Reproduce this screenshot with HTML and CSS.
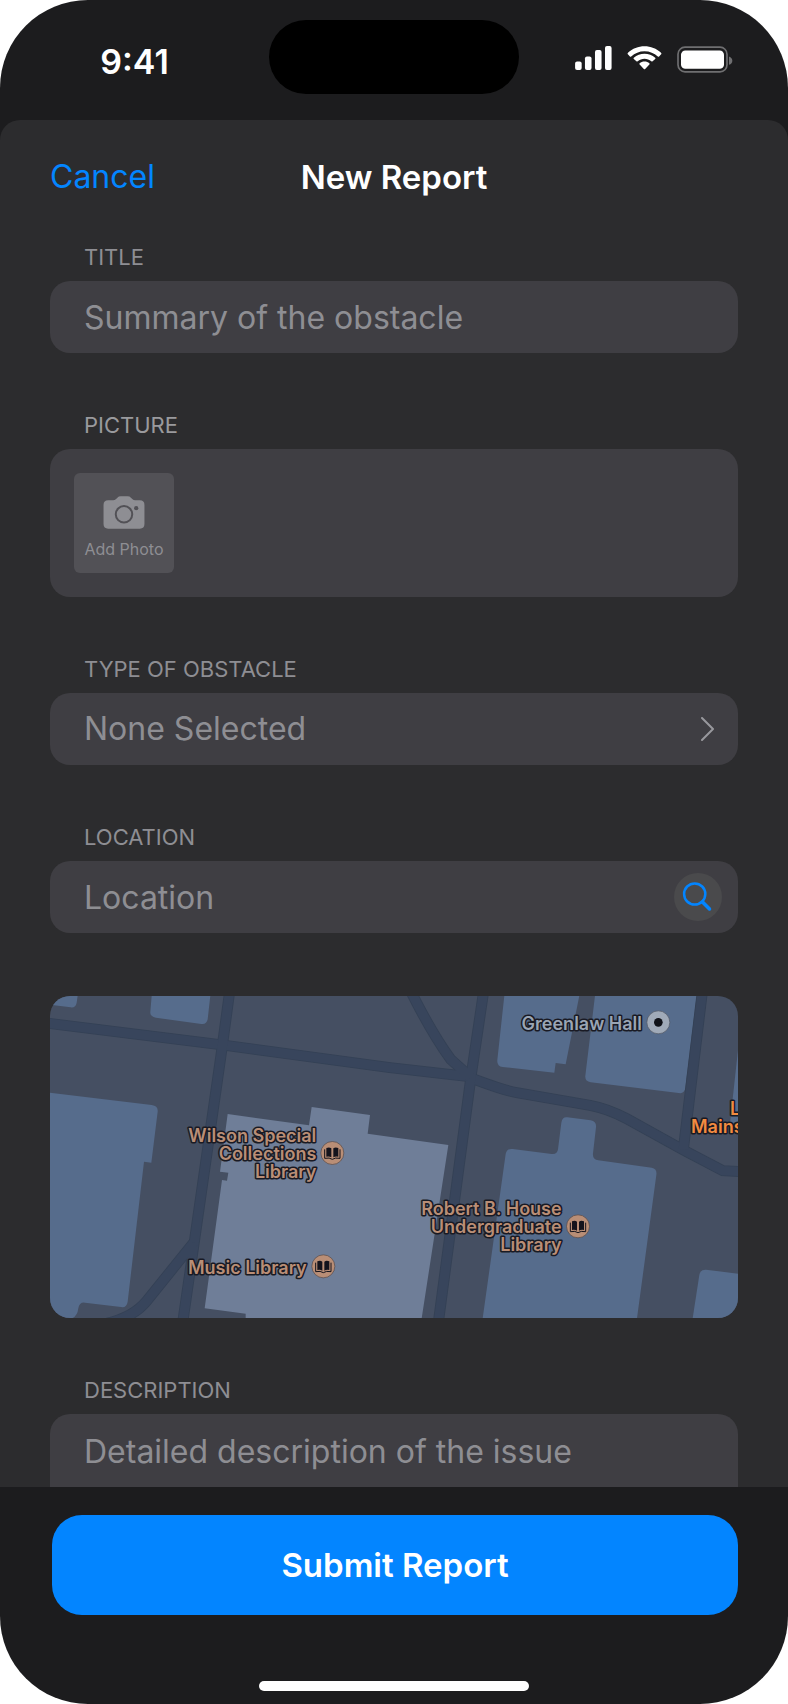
FILE: index.html
```html
<!DOCTYPE html>
<html lang="en">
<head>
<meta charset="utf-8">
<meta name="viewport" content="width=device-width, initial-scale=1">
<title>New Report</title>
<link rel="stylesheet" href="styles.css">
</head>
<body>
<div class="phone">
  <div class="status">
    <div class="status-time">9:41</div>
    <div class="island"></div>
    <div class="status-icons">
      <svg class="icon-signal" viewBox="560 138 112 73" aria-hidden="true">
        <rect x="560" y="185" width="20" height="26" rx="6"/>
        <rect x="590" y="170" width="20" height="41" rx="6"/>
        <rect x="620.500" y="150" width="20" height="61" rx="6"/>
        <rect x="651" y="138" width="20" height="73" rx="6"/>
      </svg>
      <svg class="icon-wifi" viewBox="716 137 106 74" aria-hidden="true">
        <path d="M769 153C785 153 799 159 810 169Q812 171 814 169L821 162Q822 160 820 158C806 145 788 138 769 138S732 145 718 158Q716 160 717 162L724 169Q726 171 728 169C739 159 753 153 769 153Z"/>
        <path d="M769 176C777 176 784 179 790 184Q792 186 794 184L802 177Q804 175 802 173C793 165 781 161 769 161S745 165 736 173Q734 175 736 177L744 184Q746 186 748 184C754 179 761 176 769 176Z"/>
        <path d="M784 194Q786 192 784 190C780 187 775 185 769 185S758 187 754 190Q752 192 754 194L767 208Q769 210 771 208Z"/>
      </svg>
      <svg class="icon-battery" viewBox="867 137 168 80" aria-hidden="true">
        <rect class="battery-shell" x="870" y="140" width="147" height="74" rx="21"/>
        <path class="battery-cap" d="M1023 168Q1033 172 1033 181T1023 193Z"/>
        <rect x="879" y="150" width="129" height="55" rx="13"/>
      </svg>
    </div>
  </div>

  <form class="sheet">
    <header class="nav">
      <button class="nav-cancel" type="button">Cancel</button>
      <h1 class="nav-title">New Report</h1>
    </header>

    <div class="sections">
      <div class="section">
        <label class="caption" for="title">TITLE</label>
        <div class="field">
          <input class="field-input" id="title" type="text" placeholder="Summary of the obstacle">
        </div>
      </div>

      <div class="section">
        <h2 class="caption caption-strong">PICTURE</h2>
        <div class="photos">
          <button class="add-photo" type="button">
            <svg class="icon-camera" viewBox="186 797 126 100" aria-hidden="true">
              <path class="camera-body" d="M201 810H216Q221 810 225 806L229 802Q233 798 239 798H260Q266 798 270 802L274 806Q278 810 283 810H297Q311 810 311 824V882Q311 896 297 896H201Q187 896 187 882V824Q187 810 201 810Z"/>
              <circle class="camera-lens" cx="249" cy="852.500" r="25"/>
              <circle class="camera-dot" cx="286" cy="834" r="6.500"/>
            </svg>
            Add Photo
          </button>
        </div>
      </div>

      <div class="section">
        <h2 class="caption" id="type-caption">TYPE OF OBSTACLE</h2>
        <button class="field field-button" id="type" type="button" aria-labelledby="type-caption type">
          None Selected
          <svg class="icon-chevron" viewBox="0 0 13 24" aria-hidden="true"><path d="M1 1 12 12 1 23"/></svg>
        </button>
      </div>

      <div class="section">
        <label class="caption" for="location">LOCATION</label>
        <div class="field field-search">
          <input class="field-input" id="location" type="text" placeholder="Location">
          <button class="search" type="button" aria-label="Search location">
            <svg class="icon-search" viewBox="0 0 48 48" aria-hidden="true">
              <circle cx="20.700" cy="21" r="10.600"/>
              <path d="M28.500 29 35.500 36"/>
            </svg>
          </button>
        </div>
      </div>

      <div class="map-wrap">
        <svg class="map" viewBox="30 47 2064 968" preserveAspectRatio="xMidYMid slice" role="img" aria-label="Campus map">
          <defs>
            <g id="library-pin">
              <circle class="pin-library" r="34.500"/>
              <path class="pin-page" d="M-3 13Q-9 9-18 11V-15Q-9-19-3-14ZM3 13Q9 9 18 11V-15Q9-19 3-14Z"/>
              <path class="pin-cover" d="M-23-11V16Q-8 13 0 19Q8 13 23 16V-11"/>
            </g>
            <g id="roads">
              <path d="M10 128 540 194 1050 263 1280 289C1340 312 1400 333 1430 338L1650 376C1700 385 1730 400 1760 416L1930 510 2048 572 2110 575"/>
              <path d="M570 27 546 205 463 785 427 1035"/>
              <path d="M461 788 320 963Q280 1012 200 1030"/>
              <path d="M1332 27 1293 290 1194 1035"/>
              <path d="M1108 25C1150 110 1190 180 1232 238L1292 292"/>
              <path d="M1988 27 1930 508"/>
            </g>
          </defs>
          <rect class="ground" x="30" y="47" width="2064" height="968"/>
          <g class="building">
            <path d="M30 47H113L110 68Q107 84 92 82L30 74Z"/>
            <path d="M335 47H511L503 118Q500 134 484 132L348 113Q329 110 331 95Z"/>
            <path d="M30 338 335 375Q355 378 353 395L334 548 312 545 263 965Q260 984 243 981L135 968Q118 966 115 985 112 1010 95 1015H30Z"/>
            <path d="M1393 47H1618L1577 253 1547 249 1543 278 1388 261Q1370 258 1372 240Z"/>
            <path d="M1665 47H1970L1936 325Q1933 342 1916 339L1652 307Q1634 303 1636 287Z"/>
            <path d="M2094 210 2070 430 2094 433Z"/>
            <path d="M1397 522Q1401 505 1418 507L1535 522Q1552 524 1554 508L1564 428Q1567 410 1582 412L1652 421Q1670 424 1668 442L1659 520Q1657 538 1675 541L1835 563Q1852 566 1849 585L1791 1015H1328Z"/>
            <path d="M1978 885Q1981 868 1998 869L2094 881V1015H1958Z"/>
          </g>
          <path class="building-light" d="M563 402 807 436 815 381 990 405 983 461 1225 495 1145 1015H617V1001L494 985 546 600 561 602 565 578 540 575Z"/>
          <use class="road-edge" href="#roads"/>
          <use class="road" href="#roads"/>
          <g class="place place-library">
            <text x="829" y="486">Wilson Special</text>
            <text x="829" y="540">Collections</text>
            <text x="829" y="594">Library</text>
            <text x="800" y="881">Music Library</text>
            <text x="1565" y="706">Robert B. House</text>
            <text x="1565" y="760">Undergraduate</text>
            <text x="1565" y="814">Library</text>
          </g>
          <use href="#library-pin" x="877" y="519"/>
          <use href="#library-pin" x="850" y="859"/>
          <use href="#library-pin" x="1614" y="739"/>
          <text class="place place-hall" x="1806" y="149">Greenlaw Hall</text>
          <circle class="pin-hall" cx="1855" cy="127" r="34.500"/>
          <circle class="pin-hall-dot" cx="1855" cy="127" r="13"/>
          <g class="place place-food">
            <text x="2070" y="405">L</text>
            <text x="1953" y="460">Mains</text>
          </g>
        </svg>
      </div>

      <div class="section">
        <label class="caption" for="description">DESCRIPTION</label>
        <textarea class="field field-area" id="description" rows="1" placeholder="Detailed description of the issue"></textarea>
      </div>
    </div>
  </form>

  <footer class="footer">
    <button class="submit" type="button">Submit Report</button>
    <div class="home-bar"></div>
  </footer>
</div>
</body>
</html>
```
FILE: styles.css
```css
* {
  box-sizing: border-box;
}

body {
  margin: 0;
  background: #fff;
  color: #fff;
  font-family: Inter, "Liberation Sans", sans-serif;
}

button,
input,
textarea {
  border: 0;
  margin: 0;
  padding: 0;
  background: none;
  color: inherit;
  font: inherit;
}

svg {
  display: block;
}

.phone {
  display: flex;
  flex-direction: column;
  min-height: 100vh;
  overflow: hidden;
  border-radius: 88px;
  background: #1c1c1e;
}

/* Status bar */
.status {
  display: grid;
  grid-template-columns: 1fr 250px 1fr;
  align-items: center;
  padding: 20px 0 26px;
}

.status-time {
  padding-top: 10px;
  font-size: 34px;
  font-weight: 600;
  line-height: 40px;
  text-align: center;
}

.island {
  height: 74px;
  border-radius: 37px;
  background: #000;
}

.status-icons {
  display: flex;
  justify-content: center;
  gap: 15px;
  padding-top: 4px;
  fill: #fff;
}

.icon-signal {
  width: 37px;
  height: 24px;
}

.icon-wifi {
  width: 35px;
  height: 24px;
}

.icon-battery {
  width: 56px;
  height: 27px;
}

.battery-shell {
  fill: none;
  stroke: #6f6f71;
  stroke-width: 5;
}

.battery-cap {
  fill: #6f6f71;
}

/* Sheet */
.sheet {
  flex: 1;
  padding: 37px 50px 0;
  border-radius: 20px 20px 0 0;
  background: #2c2c2e;
}

.nav {
  display: grid;
  grid-template-columns: 1fr auto 1fr;
  align-items: center;
  margin-bottom: 44px;
  line-height: 40px;
}

.nav-cancel {
  justify-self: start;
  color: #0385ff;
  font-size: 32px;
}

.nav-title {
  margin: 0;
  font-size: 33px;
  font-weight: 600;
}

.sections {
  display: flex;
  flex-direction: column;
  gap: 56px;
}

.caption {
  display: block;
  margin: 0 34px 8px;
  color: #8e8e93;
  font-size: 22px;
  font-weight: 400;
  line-height: 32px;
}

.caption-strong {
  color: #9a9a9d;
}

.field {
  display: flex;
  align-items: center;
  width: 100%;
  height: 72px;
  padding: 0 24px 0 34px;
  border-radius: 20px;
  background: #3f3e43;
  font-size: 32px;
  line-height: 40px;
}

.field-input {
  flex: 1;
  min-width: 0;
  height: 100%;
}

.field-input::placeholder,
.field-area::placeholder {
  color: #8e8e93;
  opacity: 1;
}

.field-button {
  justify-content: space-between;
  color: #8e8e93;
}

.icon-chevron {
  width: 13px;
  height: 24px;
  fill: none;
  stroke: #98989d;
  stroke-width: 2;
  stroke-linecap: round;
  stroke-linejoin: round;
}

.field-search {
  padding-right: 16px;
}

.search {
  width: 48px;
  height: 48px;
  border-radius: 24px;
  background: #4a4a4c;
}

.icon-search {
  width: 48px;
  height: 48px;
  fill: none;
  stroke: #0385ff;
  stroke-width: 2.5;
  stroke-linecap: round;
}

.icon-search path {
  stroke-width: 3.5;
}

.field-area {
  display: block;
  height: 73px;
  padding: 18px 34px 0;
  border-radius: 20px 20px 0 0;
  resize: none;
  overflow: hidden;
}

/* Photos */
.photos {
  display: flex;
  padding: 24px;
  border-radius: 20px;
  background: #3f3e43;
}

.add-photo {
  display: flex;
  flex-direction: column;
  align-items: center;
  justify-content: center;
  gap: 10px;
  width: 100px;
  height: 100px;
  padding-top: 8px;
  border-radius: 6px;
  background: #525156;
  color: #8e8e93;
  font-size: 16px;
  line-height: 20px;
  white-space: nowrap;
}

.icon-camera {
  width: 42px;
  height: 33px;
}

.camera-body {
  fill: #8e8e93;
}

.camera-lens {
  fill: none;
  stroke: #525156;
  stroke-width: 6;
}

.camera-dot {
  fill: #525156;
}

/* Map */
.map-wrap {
  padding-top: 7px;
}

.map {
  width: 100%;
  aspect-ratio: 688 / 322;
  border-radius: 20px;
}

.ground {
  fill: #454f62;
}

.building {
  fill: #566c8c;
}

.building-light {
  fill: #6f7e98;
}

.road,
.road-edge {
  fill: none;
  stroke: #38455c;
  stroke-width: 28;
}

.road-edge {
  stroke: #344155;
  stroke-width: 33;
}

.place {
  font-size: 54px;
  font-weight: 600;
  text-anchor: end;
  stroke: #191a24;
  stroke-width: 9;
  stroke-linejoin: round;
  paint-order: stroke;
}

.place-library {
  fill: #b98e76;
}

.place-hall {
  fill: #9aa5b4;
}

.place-food {
  fill: #f28b40;
  text-anchor: start;
}

.pin-library {
  fill: #b98e76;
  stroke: #4d4548;
  stroke-width: 2;
}

.pin-page {
  fill: #14131c;
}

.pin-cover {
  fill: none;
  stroke: #14131c;
  stroke-width: 3;
}

.pin-hall {
  fill: #a0aab8;
  stroke: #4b525e;
  stroke-width: 2;
}

.pin-hall-dot {
  fill: #101218;
}

/* Footer */
.footer {
  display: flex;
  flex-direction: column;
  align-items: center;
  padding: 28px 50px 13px;
}

.submit {
  align-self: stretch;
  height: 100px;
  margin: 0 0 66px 2px;
  border-radius: 30px;
  background: #0385ff;
  font-size: 33px;
  font-weight: 600;
}

.home-bar {
  width: 270px;
  height: 10px;
  border-radius: 5px;
  background: #fff;
}
```
